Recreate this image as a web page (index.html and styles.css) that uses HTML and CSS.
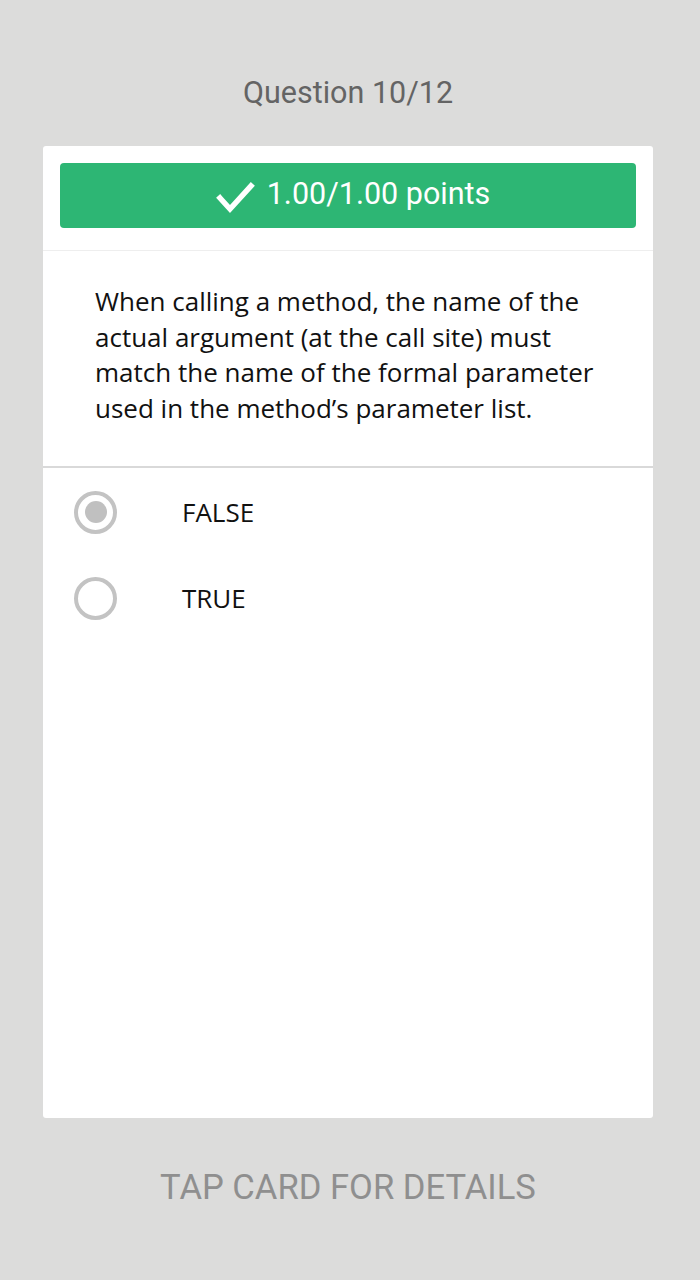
FILE: index.html
```html
<!DOCTYPE html>
<html>
<head>
<meta charset="utf-8">
<link rel="stylesheet" href="styles.css">
</head>
<body>
<div class="screen">
  <div class="counter">Question 10/12</div>
  <div class="card">
    <div class="score-wrap">
      <div class="score">
        <svg class="check" width="40" height="34" viewBox="0 0 40 34"><path d="M4 17 L14 28 L35 5" fill="none" stroke="#fff" stroke-width="5.5" stroke-linecap="square"/></svg>
        <span>1.00/1.00 points</span>
      </div>
    </div>
    <div class="question">When calling a method, the name of the actual argument (at the call site) must match the name of the formal parameter used in the method’s parameter list.</div>
    <div class="options">
      <div class="option"><span class="radio checked"><span class="dot"></span></span><span class="label">FALSE</span></div>
      <div class="option"><span class="radio"></span><span class="label">TRUE</span></div>
    </div>
  </div>
  <div class="hint">TAP CARD FOR DETAILS</div>
</div>
</body>
</html>
```
FILE: styles.css
```css
html, body { margin: 0; padding: 0; }
body { background: #dcdcdb; width: 700px; height: 1280px; overflow: hidden; }
.screen { display: flex; flex-direction: column; align-items: center; padding-right: 4px; }
.counter {
  font-family: Roboto, "Liberation Sans", sans-serif;
  font-size: 30.5px; color: #646464;
  margin-top: 74px; height: 37px; line-height: 37px;
}
.card {
  margin-top: 35px;
  width: 610px; height: 972px;
  background: #fff; border-radius: 3px;
  display: flex; flex-direction: column;
}
.score-wrap { padding: 17px 17px 22px 17px; border-bottom: 1px solid #eeeeee; }
.score {
  height: 65px; background: #2db674; border-radius: 4px;
  display: flex; align-items: center; justify-content: center; gap: 11px;
  color: #fff; font-family: Roboto, "Liberation Sans", sans-serif; font-size: 30.5px;
  padding-left: 10px;
}
.score span { margin-top: -5px; }
.check { margin-top: 4px; }
.question {
  font-family: "Open Sans", "Liberation Sans", sans-serif;
  font-size: 26px; line-height: 35.5px; color: #111;
  padding: 33px 30px 40px 52px;
  border-bottom: 2px solid #d9d9d9;
}
.options { padding-top: 1px; }
.option { display: flex; align-items: center; height: 86px; }
.radio {
  box-sizing: border-box; width: 43px; height: 43px; border-radius: 50%;
  border: 4px solid #c3c3c3; margin-left: 31px;
  display: flex; align-items: center; justify-content: center;
}
.dot { width: 22px; height: 22px; border-radius: 50%; background: #c0c0c0; }
.label {
  margin-left: 65px;
  font-family: "Open Sans", "Liberation Sans", sans-serif;
  font-size: 26px; color: #111;
}
.hint {
  margin-top: 47px;
  font-family: Roboto, "Liberation Sans", sans-serif;
  font-size: 34.6px; color: #8f8f8f; line-height: 44px;
}
```
